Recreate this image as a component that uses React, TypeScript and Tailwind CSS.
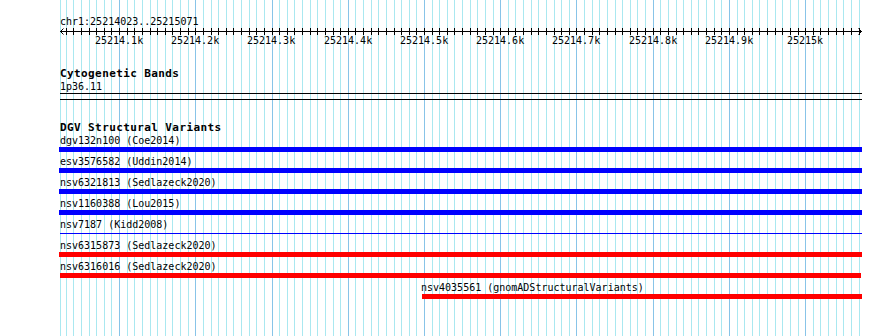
import React from "react";

// Base-level view of chr1:25214023..25215071 with the DGV track below.
// Offsets below are bases past 25214000.
const toX = (offset: number) => 42.8 + 0.7624 * offset;

const guides: number[] = [];
for (let p = 30; p <= 1070; p += 10) guides.push(p);

const tickLabels = [100, 200, 300, 400, 500, 600, 700, 800, 900, 1000].map((p) => ({
  p,
  label: p === 1000 ? "25215k" : `25214.${p / 100}k`,
}));

type Variant = { label: string; text?: string; bar: string };

const variants: Variant[] = [
  { label: "dgv132n100 (Coe2014)", bar: "-ml-px h-[5px] w-[803px] bg-[#0000ff]" },
  { label: "esv3576582 (Uddin2014)", bar: "-ml-px h-[5px] w-[803px] bg-[#0000ff]" },
  { label: "nsv6321813 (Sedlazeck2020)", bar: "-ml-px h-[5px] w-[803px] bg-[#0000ff]" },
  { label: "nsv1160388 (Lou2015)", bar: "-ml-px h-[5px] w-[803px] bg-[#0000ff]" },
  { label: "nsv7187 (Kidd2008)", bar: "mt-[2px] h-px w-[802px] bg-[#0000ff]" },
  { label: "nsv6315873 (Sedlazeck2020)", bar: "-ml-px h-[5px] w-[803px] bg-[#ff0000]" },
  { label: "nsv6316016 (Sedlazeck2020)", bar: "h-[5px] w-[801px] bg-[#ff0000]" },
  {
    label: "nsv4035561 (gnomADStructuralVariants)",
    text: "ml-[361px]",
    bar: "ml-[362px] h-[5px] w-[440px] bg-[#ff0000]",
  },
];

function Guidelines() {
  return (
    <svg
      className="absolute left-0 top-0"
      width={890}
      height={336}
      shapeRendering="crispEdges"
    >
      <line x1={60.5} x2={60.5} y1={0} y2={336} stroke="#aae8f0" />
      {guides.map((p) => {
        const x = Math.round(toX(p)) + 0.5;
        return (
          <line
            key={p}
            x1={x}
            x2={x}
            y1={0}
            y2={336}
            stroke={p % 100 === 0 ? "#88c4e8" : "#aae8f0"}
          />
        );
      })}
    </svg>
  );
}

function Ruler() {
  return (
    <svg width={803} height={9} shapeRendering="crispEdges" className="block">
      <line x1={0} x2={802} y1={4.5} y2={4.5} stroke="#000" />
      {guides.map((p) => {
        const x = Math.round(toX(p)) - 60 + 0.5;
        return <line key={p} x1={x} x2={x} y1={1} y2={8} stroke="#000" />;
      })}
      <polyline points="3.5,1.5 0.5,4.5 3.5,7.5" fill="none" stroke="#000" shapeRendering="auto" />
      <polyline points="798.5,1.5 801.5,4.5 798.5,7.5" fill="none" stroke="#000" shapeRendering="auto" />
    </svg>
  );
}

export default function App() {
  return (
    <div className="relative h-[336px] w-[890px] overflow-hidden bg-white font-['DejaVu_Sans_Mono',monospace] text-[10px] leading-[10px] text-black">
      <Guidelines />
      <div className="relative ml-[60px] flex w-[802px] flex-col pt-[17px]">
        <div className="h-[10px] whitespace-nowrap">chr1:25214023..25215071</div>
        <Ruler />
        <div className="relative h-[10px]">
          {tickLabels.map((t) => (
            <span
              key={t.p}
              className="absolute top-0 whitespace-nowrap"
              style={{ left: Math.round(toX(t.p) - 60 - (t.label.length * 6.02) / 2) }}
            >
              {t.label}
            </span>
          ))}
        </div>

        <div className="mt-[22px] h-[11px] whitespace-nowrap text-[11px] font-bold leading-[11px] tracking-[0.4px]">
          Cytogenetic Bands
        </div>
        <div className="mt-[3px] h-[10px]">1p36.11</div>
        <div className="mt-px h-[7px] border-y border-black" />

        <div className="mt-[22px] h-[11px] whitespace-nowrap text-[11px] font-bold leading-[11px] tracking-[0.4px]">
          DGV Structural Variants
        </div>
        <div className="mt-[3px] flex flex-col">
          {variants.map((v) => (
            <div key={v.label} className="flex h-[21px] flex-col">
              <div className={`h-[10px] whitespace-nowrap ${v.text ?? ""}`}>{v.label}</div>
              <div className="mt-px h-[5px]">
                <div className={v.bar} />
              </div>
            </div>
          ))}
        </div>
      </div>
    </div>
  );
}
